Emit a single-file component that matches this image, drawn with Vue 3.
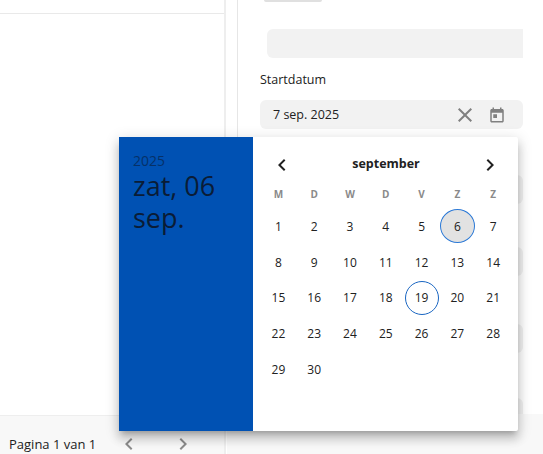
<template>
  <div class="page">
    <div class="main">
      <section class="left">
        <div class="left-head"></div>
        <div class="left-body"></div>
        <footer class="pager">
          <span class="pager-text">Pagina 1 van 1</span>
          <button type="button" class="pager-btn" aria-label="Vorige">
            <svg width="24" height="24" viewBox="0 0 24 24"><path d="M15.410 7.410 14 6l-6 6 6 6 1.410-1.410L10.830 12z" /></svg>
          </button>
          <button type="button" class="pager-btn" aria-label="Volgende">
            <svg width="24" height="24" viewBox="0 0 24 24"><path d="M8.590 16.590 10 18l6-6-6-6-1.410 1.410L13.170 12z" /></svg>
          </button>
        </footer>
      </section>
      <aside class="side">
        <div class="chip"></div>
        <div class="empty-field"></div>
        <label class="field-label">Startdatum</label>
        <div class="date-field">
          <span class="date-value">7 sep. 2025</span>
          <svg class="field-icon" width="24" height="24" viewBox="0 0 24 24"><path d="M19 6.410 17.590 5 12 10.590 6.410 5 5 6.410 10.590 12 5 17.590 6.410 19 12 13.410 17.590 19 19 17.590 13.410 12z" /></svg>
          <svg class="field-icon" width="18" height="18" viewBox="0 0 24 24"><path d="M19 4h-1V2h-2v2H8V2H6v2H5c-1.100 0-2 .9-2 2v14c0 1.100.9 2 2 2h14c1.100 0 2-.9 2-2V6c0-1.100-.9-2-2-2zm0 16H5V9h14v11zM7 11h5v5H7z" /></svg>
        </div>
        <div v-for="gap in stubGaps" :key="gap" class="stub" :style="{ marginTop: gap + 'px' }"></div>
        <div class="side-footer"></div>
      </aside>
    </div>

    <div class="picker">
      <div class="picker-head">
        <div class="picker-year">2025</div>
        <div class="picker-date">zat, 06 sep.</div>
      </div>
      <div class="picker-cal">
        <div class="month-row">
          <svg width="24" height="24" viewBox="0 0 24 24"><path d="M15.410 7.410 14 6l-6 6 6 6 1.410-1.410L10.830 12z" /></svg>
          <span class="month-name">september</span>
          <svg width="24" height="24" viewBox="0 0 24 24"><path d="M8.590 16.590 10 18l6-6-6-6-1.410 1.410L13.170 12z" /></svg>
        </div>
        <div class="grid week-row">
          <span v-for="(d, i) in weekdays" :key="i" class="weekday">{{ d }}</span>
        </div>
        <div class="grid">
          <span
            v-for="d in 30"
            :key="d"
            class="day"
            :class="{ selected: d === 6, today: d === 19 }"
          >{{ d }}</span>
        </div>
      </div>
    </div>
  </div>
</template>

<script setup>
const weekdays = ["M", "D", "W", "D", "V", "Z", "Z"];
// hidden form rows behind the picker, only their right ends show
const stubGaps = [46, 43, 48, 45];
</script>

<style>
html,
body {
  margin: 0;
  background: #fff;
}
</style>

<style scoped>
.page {
  position: relative;
  width: 543px;
  height: 454px;
  overflow: hidden;
  background: #fff;
  font-family: "Open Sans", "Liberation Sans", sans-serif;
  color: #212121;
}

.main {
  display: flex;
  height: 100%;
}

.left {
  width: 224px;
  display: flex;
  flex-direction: column;
  border-right: 2px solid #eeeeee;
}

.left-head {
  height: 13px;
  border-bottom: 1px solid #e9e9e9;
}

.left-body {
  flex: 1;
}

.pager {
  height: 39px;
  box-sizing: border-box;
  display: flex;
  align-items: flex-start;
  padding: 18px 0 0 9px;
  border-top: 1px solid #eeeeee;
  background: #f8f8f8;
}

.pager-text {
  font-size: 13px;
  line-height: 20px;
  width: 108px;
  flex: none;
}

.pager-btn {
  width: 24px;
  height: 24px;
  margin: -2px 30px 0 0;
  padding: 0;
  border: none;
  background: none;
  fill: #8c8c8c;
  flex: none;
}

.side {
  flex: 1;
  display: flex;
  flex-direction: column;
  margin-left: 11px;
  border-left: 1px solid #e6e6e6;
  padding-left: 22px;
  position: relative;
}

.chip {
  width: 58px;
  height: 2px;
  margin-left: 4px;
  background: #e0e0e0;
  border-radius: 0 0 10px 10px;
}

.empty-field {
  height: 29px;
  margin: 27px 20px 0 7px;
  background: #f2f2f2;
  border-radius: 6px 0 0 6px;
}

.field-label {
  margin-top: 13px;
  font-size: 12.5px;
  line-height: 18px;
}

.date-field {
  display: flex;
  align-items: center;
  height: 29px;
  margin: 11px 20px 0 0;
  padding: 0 17px 0 13px;
  background: #f2f2f2;
  border-radius: 6px;
  fill: #808080;
}

.date-value {
  flex: 1;
  font-size: 12.5px;
}

.field-icon + .field-icon {
  margin-left: 11px;
}

.stub {
  height: 29px;
  margin-right: 20px;
  background: #f2f2f2;
  border-radius: 6px;
  flex: none;
}

.side-footer {
  position: absolute;
  left: -11px;
  right: 0;
  top: 414px;
  bottom: 0;
  background: #f8f8f8;
}

.picker {
  position: absolute;
  left: 119px;
  top: 137px;
  width: 399px;
  height: 294px;
  display: flex;
  background: #fff;
  border-radius: 2px;
  box-shadow: 0 5px 5px -3px rgba(0, 0, 0, 0.2), 0 8px 10px 1px rgba(0, 0, 0, 0.14), 0 3px 14px 2px rgba(0, 0, 0, 0.12);
}

.picker-head {
  width: 134px;
  flex: none;
  box-sizing: border-box;
  padding: 15px 14px;
  background: #0051b3;
  color: #0a1c36;
}

.picker-year {
  font-size: 14px;
  line-height: 18px;
  opacity: 0.6;
}

.picker-date {
  font-size: 27px;
  line-height: 32px;
}

.picker-cal {
  flex: 1;
  min-width: 0;
  padding: 0 6.5px 0 7.5px;
}

.month-row {
  height: 49px;
  box-sizing: border-box;
  padding: 6px 9.5px 0 9.5px;
  display: flex;
  align-items: center;
  justify-content: space-between;
  fill: #212121;
}

.month-name {
  font-size: 12.5px;
  font-weight: 700;
  margin-bottom: 3px;
}

.grid {
  display: grid;
  grid-template-columns: repeat(7, 35.8px);
  grid-auto-rows: 35.7px;
  justify-items: center;
  align-items: center;
}

.week-row {
  grid-auto-rows: 22.5px;
  align-items: start;
}

.weekday {
  font-size: 10px;
  line-height: 17px;
  font-weight: 700;
  color: #8a8a8a;
}

.day {
  box-sizing: border-box;
  width: 34px;
  height: 34px;
  display: flex;
  align-items: center;
  justify-content: center;
  font-size: 12px;
  border-radius: 50%;
  color: #212121;
}

.selected {
  width: 35px;
  background: #e2e2e2;
  border: 1px solid #2a78d6;
}

.today {
  border: 1px solid #1a66c2;
}
</style>
